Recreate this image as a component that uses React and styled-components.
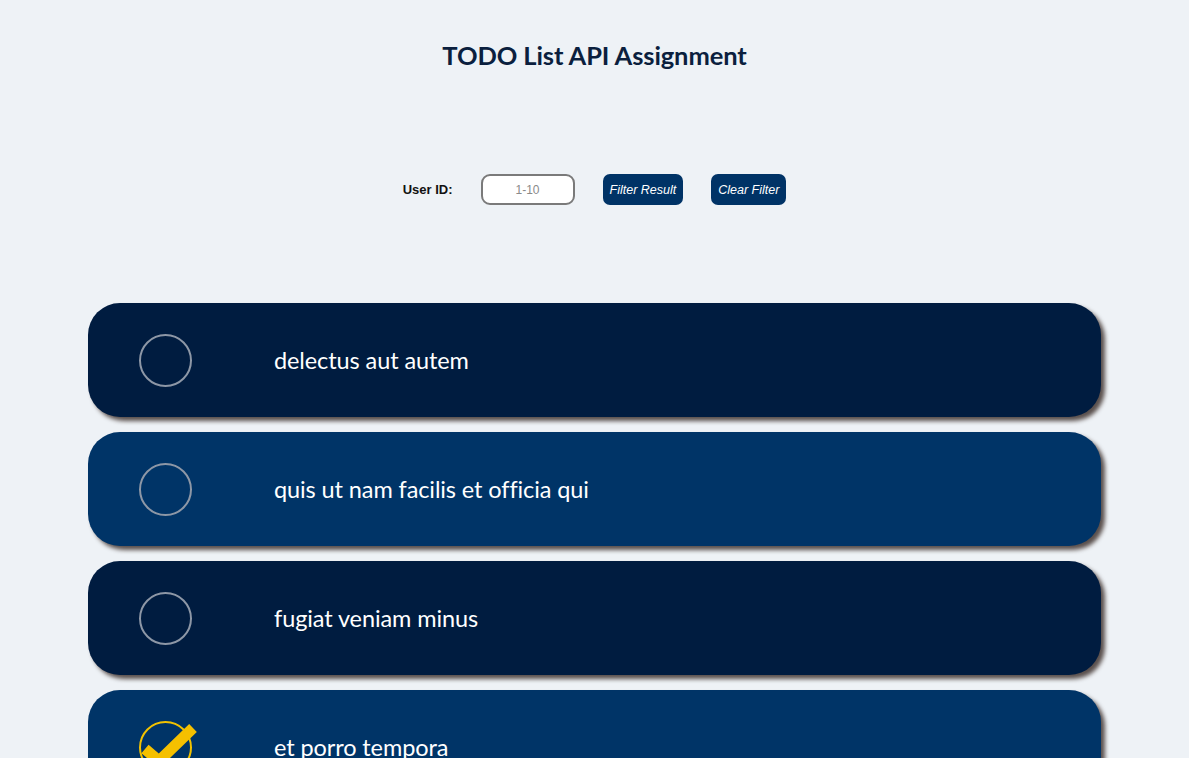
import React from 'react';
import styled, { createGlobalStyle } from 'styled-components';

const GlobalStyle = createGlobalStyle`
  body {
    margin: 0;
    background-color: #eef2f6;
    font-family: "Lato", "Open Sans", sans-serif;
  }
`;

const Page = styled.div`
  display: flex;
  flex-direction: column;
  align-items: center;
  padding-top: 40px;
`;

const Title = styled.h1`
  margin: 0;
  font-size: 25.5px;
  font-weight: 700;
  color: #0b1f3e;
  letter-spacing: -0.1px;
`;

const FilterBar = styled.div`
  display: flex;
  align-items: center;
  gap: 28px;
  margin-top: 104px;
  font-family: "Liberation Sans", Arial, sans-serif;
`;

const Label = styled.label`
  font-size: 13px;
  font-weight: 700;
  color: #111;
`;

const Input = styled.input`
  width: 94px;
  height: 31px;
  box-sizing: border-box;
  border: 2px solid #7a7a7a;
  border-radius: 9px;
  text-align: center;
  font-family: "Liberation Sans", Arial, sans-serif;
  font-size: 12px;
  background: #fff;
  &::placeholder {
    color: #8a8a8a;
  }
`;

const Button = styled.button`
  height: 31px;
  padding: 0 7px;
  border: none;
  border-radius: 7px;
  background-color: #003366;
  color: #fff;
  font-family: "Liberation Sans", Arial, sans-serif;
  font-style: italic;
  font-size: 12.5px;
  cursor: pointer;
`;

const List = styled.ul`
  list-style: none;
  margin: 98px 0 0;
  padding: 0;
  width: 1013px;
  display: flex;
  flex-direction: column;
  gap: 15px;
`;

const Item = styled.li`
  height: 114px;
  border-radius: 32px;
  background-color: ${(p) => (p.$alt ? '#003467' : '#001c40')};
  box-shadow: 4px 4px 4px rgba(40, 25, 20, 0.75);
  display: flex;
  align-items: center;
  color: #fff;
`;

const CheckBox = styled.span`
  width: 53px;
  height: 53px;
  margin-left: 51px;
  flex-shrink: 0;
  box-sizing: border-box;
  border-radius: 50%;
  border: 2px solid ${(p) => (p.$done ? '#f2c200' : '#8d97a6')};
  position: relative;
`;

const CheckMark = styled.svg`
  position: absolute;
  left: -2px;
  top: -4px;
`;

const ItemText = styled.span`
  margin-left: 82px;
  font-size: 23.5px;
  letter-spacing: -0.1px;
`;

const todos = [
  { id: 1, title: 'delectus aut autem', completed: false },
  { id: 2, title: 'quis ut nam facilis et officia qui', completed: false },
  { id: 3, title: 'fugiat veniam minus', completed: false },
  { id: 4, title: 'et porro tempora', completed: true },
];

const App = () => {
  return (
    <Page>
      <GlobalStyle />
      <Title>TODO List API Assignment</Title>
      <FilterBar>
        <Label>User ID:</Label>
        <Input placeholder="1-10" />
        <Button>Filter Result</Button>
        <Button>Clear Filter</Button>
      </FilterBar>
      <List>
        {todos.map((todo, i) => (
          <Item key={todo.id} $alt={i % 2 === 1}>
            <CheckBox $done={todo.completed}>
              {todo.completed && (
                <CheckMark width="58" height="54" viewBox="0 0 58 54">
                  <path
                    d="M6 30 L20 42 L54 9"
                    fill="none"
                    stroke="#f5c000"
                    strokeWidth="11"
                    strokeLinejoin="miter"
                  />
                </CheckMark>
              )}
            </CheckBox>
            <ItemText>{todo.title}</ItemText>
          </Item>
        ))}
      </List>
    </Page>
  );
};

export default App;
